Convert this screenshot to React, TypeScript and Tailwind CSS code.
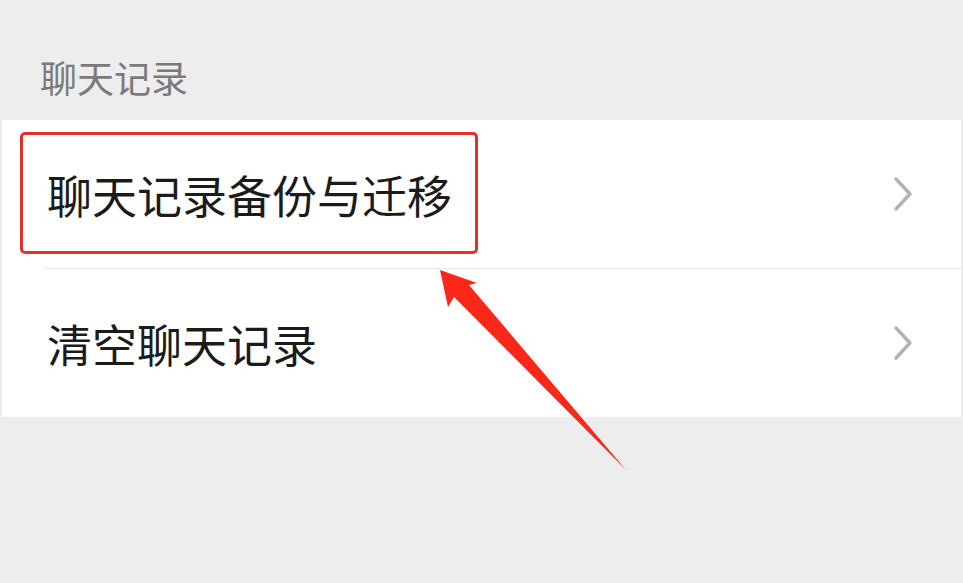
import React from 'react'

const Chevron = () => (
  <svg width="22" height="36" viewBox="0 0 22 36" fill="none" stroke="#b2b2b2" strokeWidth="3.4" strokeLinecap="round" strokeLinejoin="round">
    <path d="M4 3l14 15L4 33" />
  </svg>
)

const Row = ({ label }: { label: string }) => (
  <div className="h-[148px] flex items-center justify-between pl-[45px] pr-[47px]">
    <span className="text-[45px] leading-none text-[#1b1b1b]">{label}</span>
    <Chevron />
  </div>
)

export default function App() {
  return (
    <div
      className="relative w-[963px] h-[583px] bg-[#ededed] overflow-hidden"
      style={{ fontFamily: '"Noto Sans CJK SC", "Noto Sans", sans-serif' }}
    >
      {/* Section header */}
      <div className="h-[120px] pt-[59px] pl-[40px]">
        <p className="text-[37px] leading-none text-[#7a7a7a]">聊天记录</p>
      </div>

      {/* List */}
      <div className="ml-[2px] mr-[2px] bg-white">
        <Row label="聊天记录备份与迁移" />
        <div className="ml-[42px] h-px bg-[#e6e6e6]" />
        <Row label="清空聊天记录" />
      </div>

      {/* Annotation box */}
      <div className="absolute left-[20px] top-[132px] w-[458px] h-[122px] border-[3px] border-[#e8302a] rounded-[5px]" />

      {/* Annotation arrow */}
      <svg className="absolute left-0 top-0 pointer-events-none" width="963" height="583" viewBox="0 0 963 583">
        <polygon
          points="440,270 477,283 469,285 626,470 454,297 448,307"
          fill="#fb2719"
        />
      </svg>
    </div>
  )
}
